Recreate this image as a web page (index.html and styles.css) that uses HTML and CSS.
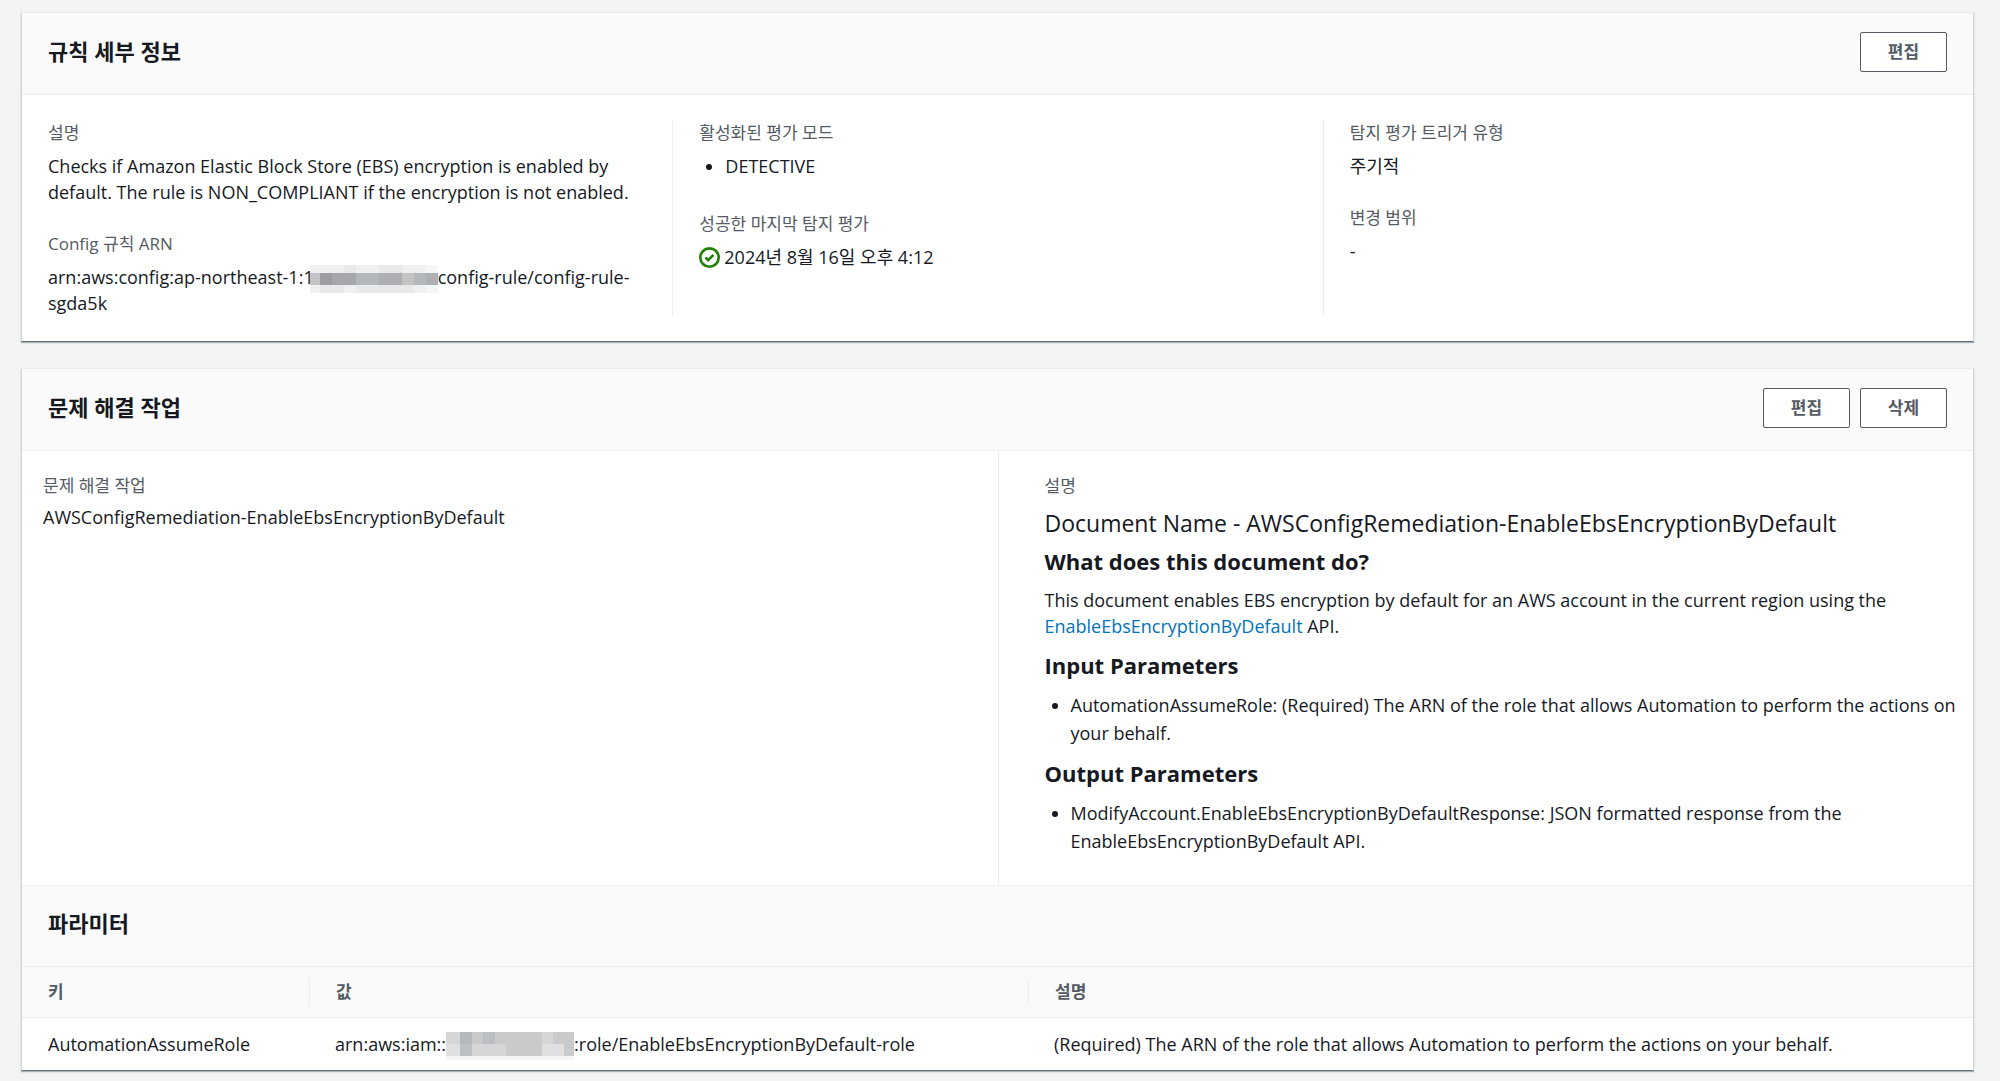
FILE: index.html
```html
<!DOCTYPE html>
<html lang="ko">
<head>
<meta charset="utf-8">
<meta name="viewport" content="width=device-width, initial-scale=1">
<title>규칙 세부 정보</title>
<link rel="stylesheet" href="styles.css">
</head>
<body>
<main class="page">
  <section class="card">
    <header class="card-header">
      <h2 class="title">규칙 세부 정보</h2>
      <button class="button" type="button">편집</button>
    </header>
    <div class="columns">
      <div class="column">
        <dl class="field">
          <dt>설명</dt>
          <dd>Checks if Amazon Elastic Block Store (EBS) encryption is enabled by default. The rule is NON_COMPLIANT if the encryption is not enabled.</dd>
        </dl>
        <dl class="field">
          <dt>Config 규칙 ARN</dt>
          <dd>arn:aws:config:ap-northeast-1:1<svg class="redacted" viewBox="0 0 128 28" aria-hidden="true" shape-rendering="crispEdges"><rect width="128" height="28" fill="#eff0f0"/><path fill="#e8e9ea" d="M34 0h12v8H34zM69 0h24v8H69zM10 20h24v8H10zM46 20h58v8H46z"/><path fill="#f5f6f6" d="M116 0h12v8h-12zM116 20h12v8h-12z"/><rect y="8" width="128" height="12" fill="#adafb2"/><path fill="#c2c4c6" d="M0 8h10v12H0zM92 8h12v12H92z"/><path fill="#9b9da0" d="M10 8h12v12H10z"/><path fill="#a5a7aa" d="M22 8h24v12H22z"/><path fill="#b3b8bb" d="M46 8h23v12H46zM104 8h12v12h-12z"/></svg><span>config-rule/config-rule-</span><wbr><span>sgda5k</span></dd>
        </dl>
      </div>
      <div class="column">
        <dl class="field">
          <dt>활성화된 평가 모드</dt>
          <dd><ul class="modes"><li>DETECTIVE</li></ul></dd>
        </dl>
        <dl class="field">
          <dt>성공한 마지막 탐지 평가</dt>
          <dd class="status"><svg class="check" viewBox="0 0 16 16" fill="none" stroke="currentColor" stroke-width="2" aria-hidden="true"><circle cx="8" cy="8" r="7"/><path d="M5 8l2 2 4-4"/></svg>2024년 8월 16일 오후 4:12</dd>
        </dl>
      </div>
      <div class="column">
        <dl class="field">
          <dt>탐지 평가 트리거 유형</dt>
          <dd>주기적</dd>
        </dl>
        <dl class="field">
          <dt>변경 범위</dt>
          <dd>-</dd>
        </dl>
      </div>
    </div>
  </section>

  <section class="card">
    <header class="card-header">
      <h2 class="title">문제 해결 작업</h2>
      <div class="actions">
        <button class="button" type="button">편집</button>
        <button class="button" type="button">삭제</button>
      </div>
    </header>
    <div class="split">
      <dl class="field action-name">
        <dt>문제 해결 작업</dt>
        <dd>AWSConfigRemediation-EnableEbsEncryptionByDefault</dd>
      </dl>
      <div class="document">
        <p class="label">설명</p>
        <h3 class="doc-name">Document Name - AWSConfigRemediation-EnableEbsEncryptionByDefault</h3>
        <h4>What does this document do?</h4>
        <p class="text">This document enables EBS encryption by default for an AWS account in the current region using the <a href="#api">EnableEbsEncryptionByDefault</a> API.</p>
        <h4>Input Parameters</h4>
        <ul class="text">
          <li>AutomationAssumeRole: (Required) The ARN of the role that allows Automation to perform the actions on your behalf.</li>
        </ul>
        <h4>Output Parameters</h4>
        <ul class="text">
          <li>ModifyAccount.EnableEbsEncryptionByDefaultResponse: JSON formatted response from the EnableEbsEncryptionByDefault API.</li>
        </ul>
      </div>
    </div>
    <header class="card-header params-header">
      <h2 class="title" id="params">파라미터</h2>
    </header>
    <table class="params" aria-labelledby="params">
      <colgroup><col class="col-key"><col class="col-value"><col></colgroup>
      <thead>
        <tr><th scope="col"><span>키</span></th><th scope="col"><span>값</span></th><th scope="col"><span>설명</span></th></tr>
      </thead>
      <tbody>
        <tr>
          <td>AutomationAssumeRole</td>
          <td>arn:aws:iam::<svg class="redacted" viewBox="0 0 128 28" aria-hidden="true" shape-rendering="crispEdges"><rect width="128" height="24" fill="#c9cacb"/><rect y="24" width="128" height="4" fill="#f6f6f6"/><path fill="#d4d6d7" d="M0 0h14v12H0zM96 0h11v12H96zM26 12h34v12H26z"/><path fill="#b5b9bc" d="M14 0h12v12H14z"/><path fill="#bcc0c2" d="M37 0h12v12H37zM14 12h12v12H14z"/><path fill="#dfe0e1" d="M0 12h14v12H0zM96 12h22v12H96z"/></svg>:role/EnableEbsEncryptionByDefault-role</td>
          <td>(Required) The ARN of the role that allows Automation to perform the actions on your behalf.</td>
        </tr>
      </tbody>
    </table>
  </section>
</main>
</body>
</html>
```
FILE: styles.css
```css
* { box-sizing: border-box; }

body {
  margin: 0;
  background: #f2f3f3;
  color: #16191f;
  font: 18px/26px "Open Sans", "Noto Sans CJK KR", sans-serif;
}

h2, h3, h4, p, ul, dl, dd { margin: 0; }
ul { padding-left: 26px; }

.page {
  display: grid;
  gap: 26px;
  padding: 12px 26px 10px 21px;
}

.card {
  background: #fff;
  border: 1px solid #d0d4d5;
  border-top-color: #eaeded;
  border-bottom-color: #687078;
  box-shadow: 0 1px 1px rgba(0, 28, 36, 0.3);
}

.card-header {
  display: flex;
  align-items: center;
  justify-content: space-between;
  min-height: 82px;
  padding: 0 26px 4px;
  background: #fafafa;
  border-bottom: 1px solid #eaeded;
}

.title {
  padding-bottom: 2px;
  font-size: 22px;
  line-height: 28px;
  font-weight: 700;
}

.actions { display: flex; gap: 10px; }

.button {
  min-width: 87px;
  height: 40px;
  padding: 0 24px;
  background: #fff;
  border: 1px solid #545b64;
  border-radius: 2px;
  color: #545b64;
  font: inherit;
  font-size: 17px;
  font-weight: 700;
}

.columns {
  display: grid;
  grid-template-columns: repeat(3, 1fr);
  padding: 25px 0;
}

.column {
  display: grid;
  align-content: start;
  gap: 26px;
  padding: 0 26px;
}

.column + .column { border-left: 1px solid #eaeded; }

.field dt, .label {
  color: #545b64;
  font-size: 17px;
}

.field dt { margin-bottom: 7px; }

.modes { padding-bottom: 6px; }

.status {
  display: flex;
  align-items: center;
  gap: 4px;
}

.check {
  width: 21px;
  height: 21px;
  color: #1d8102;
}

.redacted {
  width: 128px;
  height: 28px;
  margin: -4px 0;
  vertical-align: middle;
}

.column .redacted { margin-left: -4px; }

.split {
  display: grid;
  grid-template-columns: 1fr 1fr;
}

.action-name { padding: 22px 21px; }
.action-name dt { margin-bottom: 5px; }

.document {
  padding: 22px 12px 18px 46px;
  border-left: 1px solid #eaeded;
}

.doc-name, .document h4 {
  margin: 10px 0;
  font-size: 22px;
  line-height: 28px;
}

.document .doc-name {
  font-size: 23px;
  font-weight: 400;
}

.document .text { margin: 12px 0; }
.document li { line-height: 28px; }

a { color: #0073bb; text-decoration: none; }

.params-header { border-top: 1px solid #eaeded; }

.params {
  width: 100%;
  border-collapse: collapse;
  table-layout: fixed;
  text-align: left;
}

.col-key { width: 287px; }
.col-value { width: 719px; }

th {
  padding: 12px 0;
  background: #fafafa;
  border-bottom: 1px solid #eaeded;
  color: #545b64;
  font-size: 17px;
}

th span { display: block; padding: 0 26px; }
th + th span { border-left: 1px solid #eaeded; }
td { padding: 13px 26px; }
```
